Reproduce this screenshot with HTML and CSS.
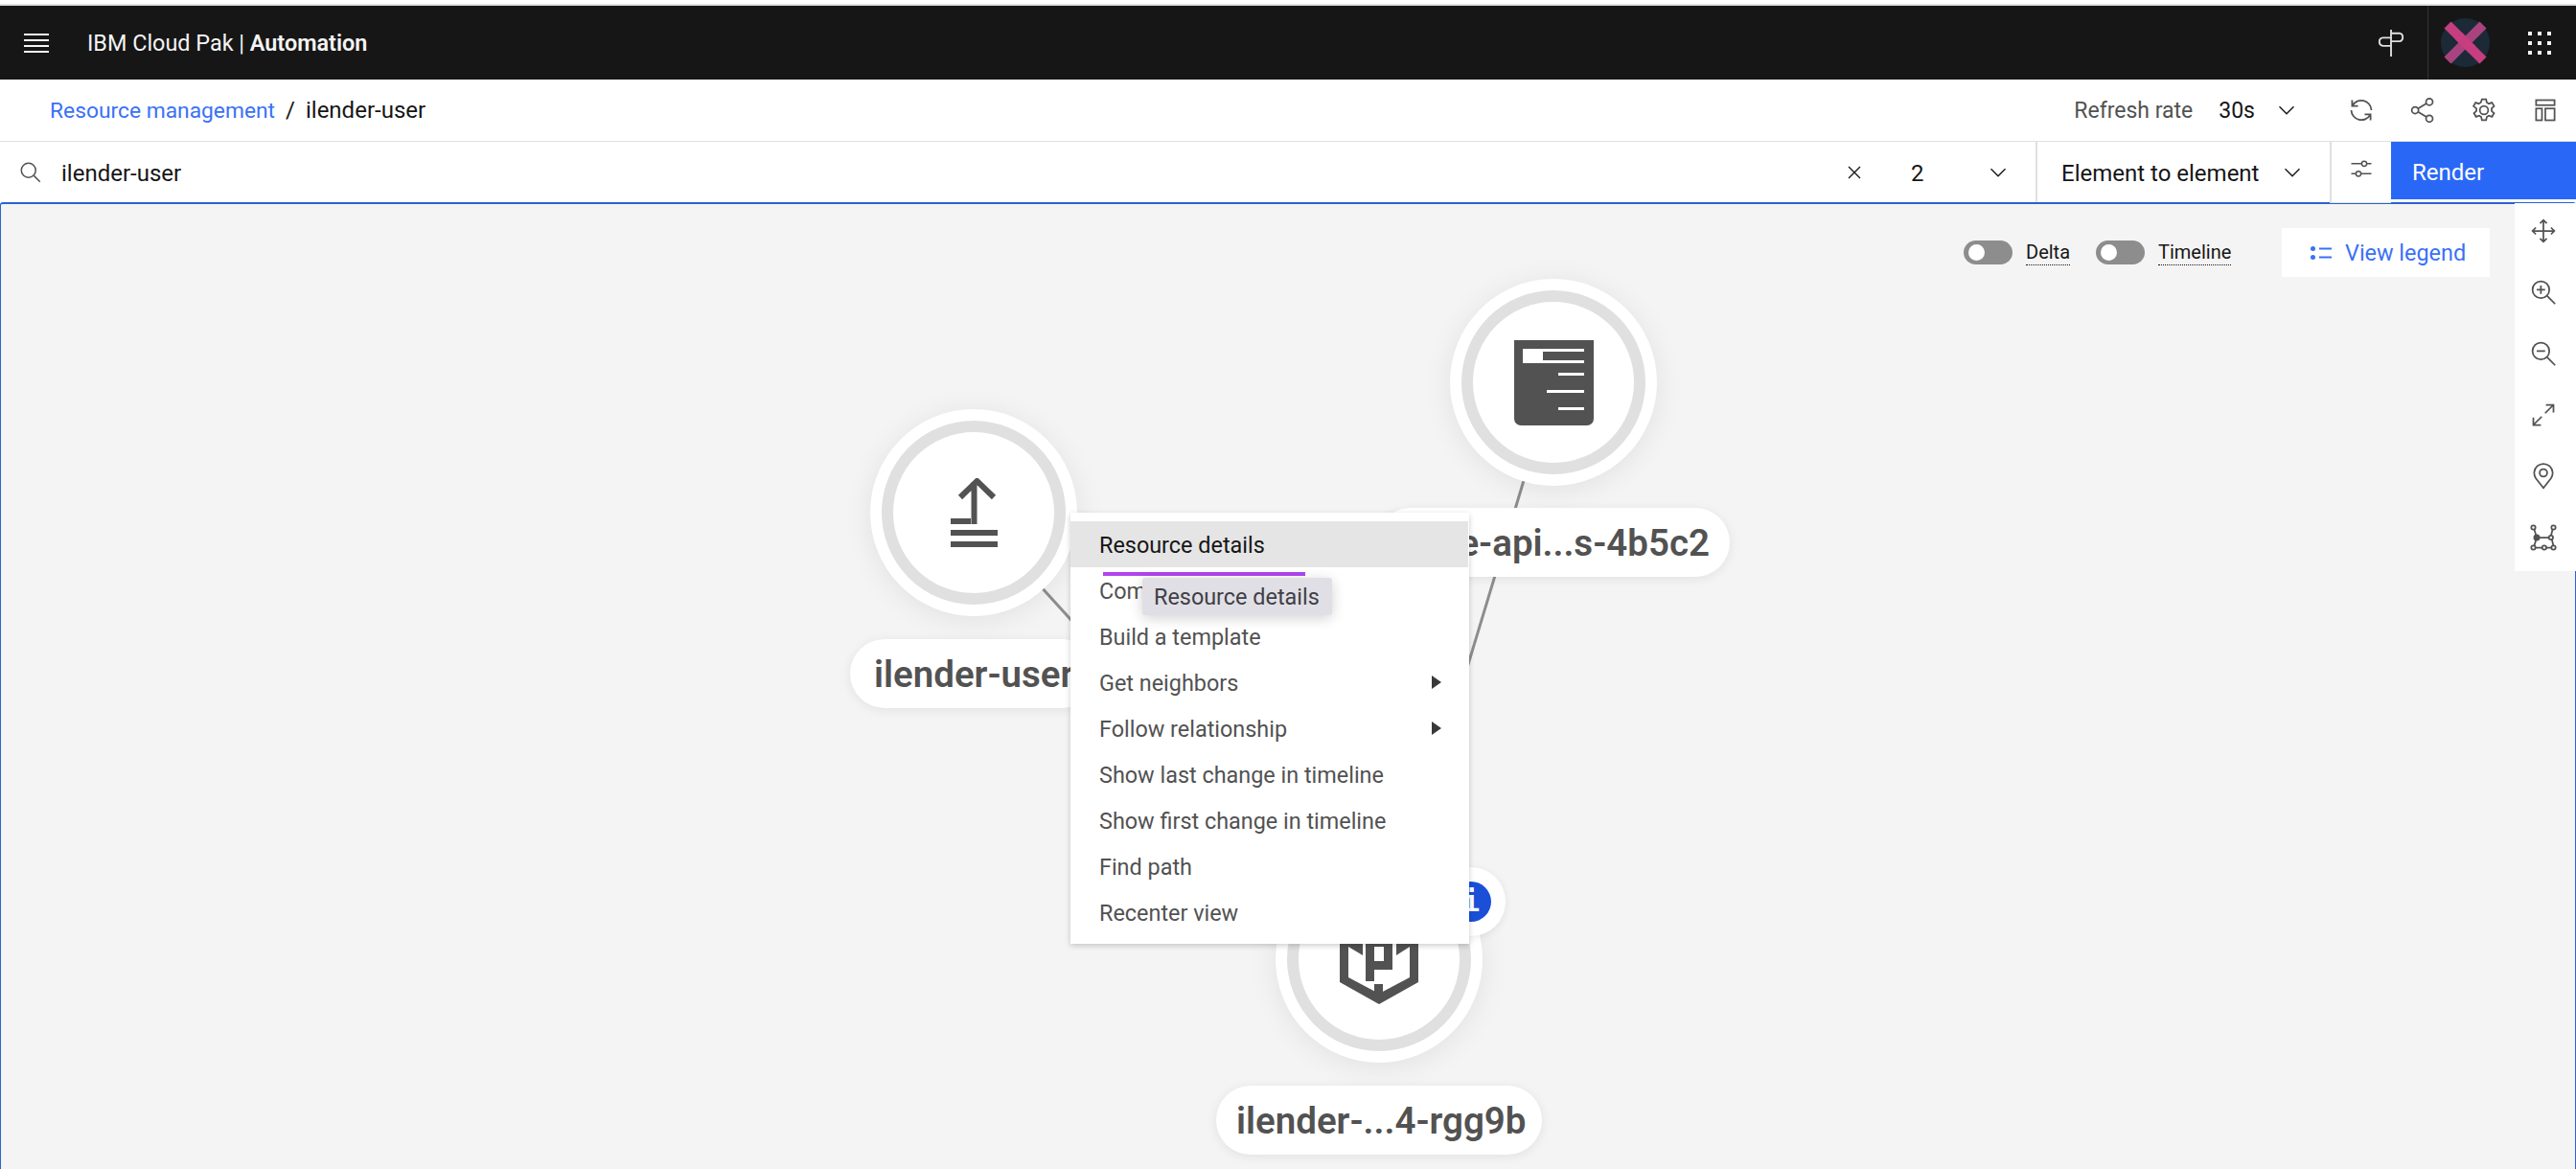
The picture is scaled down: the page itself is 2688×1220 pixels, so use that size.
FILE: index.html
```html
<!DOCTYPE html>
<html lang="en">
<head>
    <meta charset="UTF-8">
    <title>IBM Cloud Pak | Automation</title>
    <link rel="stylesheet" href="styles.css">
</head>
<body>
    <div class="top-strip"></div>

    <header class="shell">
        <svg class="hamburger" viewBox="0 0 26 20"><path d="M0 1h26M0 7h26M0 13h26M0 19h26"/></svg>
        <div class="brand">IBM Cloud Pak | <strong>Automation</strong></div>
        <svg class="ico signpost" viewBox="0 0 32 32"><path d="M16 1v30M16 5h9a4.500 4.500 0 0 1 4 4.500 4.500 4.500 0 0 1-4 4.500h-9M16 10H7a4.500 4.500 0 0 0-4 4.500A4.500 4.500 0 0 0 7 19h9"/></svg>
        <div class="shell-right">
            <svg class="avatar" viewBox="0 0 51 51">
                <circle cx="25.500" cy="25.500" r="25.500" fill="#1b2a36"/>
                <path d="M7 7l37 37" stroke="#c63d80" stroke-width="10"/>
                <path d="M44 7L7 44" stroke="#a8437f" stroke-width="10"/>
                <path d="M18 18l15 15" stroke="#c63d80" stroke-width="10"/>
            </svg>
            <div class="app-grid">
                <i></i><i></i><i></i><i></i><i></i><i></i><i></i><i></i><i></i>
            </div>
        </div>
    </header>

    <div class="breadcrumb-bar">
        <nav class="breadcrumb">
            <a>Resource management</a>
            <span class="slash">/</span>
            <span>ilender-user</span>
        </nav>
        <div class="refresh">
            <span class="refresh-label">Refresh rate</span>
            <span class="refresh-value">30s</span>
            <svg class="ico chevron" viewBox="0 0 32 32"><path d="M6 11l10 10 10-10"/></svg>
        </div>
        <div class="bar-icons">
            <svg class="ico" viewBox="0 0 32 32"><path d="M12 11H5V4M5.500 10.500A12 12 0 0 1 28 16M20 21h7v7M26.500 21.500A12 12 0 0 1 4 16"/></svg>
            <svg class="ico" viewBox="0 0 32 32"><circle cx="7" cy="16" r="4"/><circle cx="24" cy="6" r="4"/><circle cx="24" cy="26" r="4"/><path d="M10.500 14l10-6M10.500 18l10 6"/></svg>
            <svg class="ico" viewBox="0 0 32 32"><path d="M13.500 3h5l.8 3.800 2.500 1.400 3.700-1.200 2.500 4.300-2.900 2.600v3l2.900 2.600-2.500 4.300-3.700-1.200-2.500 1.400-.8 3.800h-5l-.8-3.800-2.500-1.400-3.700 1.200-2.500-4.300 2.900-2.600v-3L3.500 11.300 6 7l3.700 1.200 2.500-1.400z"/><circle cx="16" cy="16" r="5"/></svg>
            <svg class="ico" viewBox="0 0 32 32"><rect x="5" y="4" width="22" height="6"/><rect x="5" y="14" width="7" height="14"/><rect x="16" y="14" width="11" height="14"/></svg>
        </div>
    </div>

    <div class="search-bar">
        <svg class="ico search-ico" viewBox="0 0 32 32"><circle cx="13" cy="13" r="10"/><path d="M20.500 20.500L29 29"/></svg>
        <div class="search-text">ilender-user</div>
        <svg class="ico clear-ico" viewBox="0 0 32 32"><path d="M8 8l16 16M24 8L8 24"/></svg>
        <div class="hops">
            <span>2</span>
            <svg class="ico chevron" viewBox="0 0 32 32"><path d="M6 11l10 10 10-10"/></svg>
        </div>
        <div class="mode">
            <span>Element to element</span>
            <svg class="ico chevron" viewBox="0 0 32 32"><path d="M6 11l10 10 10-10"/></svg>
        </div>
        <div class="filter-btn">
            <svg class="ico" viewBox="0 0 32 32"><circle cx="20" cy="9" r="3.500"/><circle cx="12" cy="23" r="3.500"/><path d="M2 9h14.500M23.500 9H30M2 23h6.500M15.500 23H30"/></svg>
        </div>
        <button class="render-btn">Render</button>
    </div>

    <main class="canvas">
        <svg class="edges" viewBox="0 0 2686 1007">
            <path d="M1015 322L1438 788"/>
            <path d="M1620 186L1438 788"/>
        </svg>

        <div class="node node-upload">
            <div class="ring">
                <svg class="glyph" viewBox="0 0 49 72">
                    <path d="M27.500 48V4M13 20L30.500 3 48 20" class="glyph-line" transform="translate(-3 0)"/>
                    <rect x="0" y="42" width="21" height="6"/>
                    <rect x="0" y="54" width="49" height="6"/>
                    <rect x="0" y="66" width="49" height="6"/>
                </svg>
            </div>
        </div>
        <div class="label label-upload">ilender-user</div>

        <div class="node node-doc">
            <div class="ring">
                <svg class="glyph" viewBox="0 0 83 89">
                    <path d="M0 0h83v82a7 7 0 0 1-7 7H7a7 7 0 0 1-7-7z"/>
                    <path d="M9 9h64v15H9z" fill="#fff"/>
                    <path d="M30 12h43v9H30z"/>
                    <path d="M46 34h27v3H46zM34 52h39v3H34zM46 70h27v3H46z" fill="#fff"/>
                </svg>
            </div>
        </div>
        <div class="label label-doc">e-api...s-4b5c2</div>

        <div class="node node-pod">
            <div class="ring">
                <svg class="glyph" viewBox="0 0 82 94">
                    <path d="M0 0h82v71L41 94 0 71z"/>
                    <path d="M9 20h64v46L41 83 9 66z" fill="#fff"/>
                    <path d="M9 20h15v23L9 34zM73 20H59v23l14-9z"/>
                    <path d="M27 14h28v44H36v12h-9zM36 34v15h10V34z" fill-rule="evenodd"/>
                    <path d="M36 73h9v12h-9z"/>
                </svg>
            </div>
        </div>
        <div class="label label-pod">ilender-...4-rgg9b</div>
        <div class="badge"><span>i</span></div>

        <div class="view-controls">
            <div class="switch"></div>
            <span class="switch-label">Delta</span>
            <div class="switch"></div>
            <span class="switch-label">Timeline</span>
            <button class="legend-btn">
                <svg viewBox="0 0 22 14"><circle cx="2.500" cy="2.500" r="2.500"/><circle cx="2.500" cy="11.500" r="2.500"/><rect x="9" y="1.500" width="13" height="2"/><rect x="9" y="10.500" width="13" height="2"/></svg>
                View legend
            </button>
        </div>

        <div class="toolbar">
            <svg class="ico" viewBox="0 0 32 32"><path d="M16 3v26M3 16h26M12 7l4-4 4 4M12 25l4 4 4-4M7 12l-4 4 4 4M25 12l4 4-4 4"/></svg>
            <svg class="ico" viewBox="0 0 32 32"><circle cx="13" cy="13" r="10"/><path d="M20.500 20.500L30 30M13 8v10M8 13h10"/></svg>
            <svg class="ico" viewBox="0 0 32 32"><circle cx="13" cy="13" r="10"/><path d="M20.500 20.500L30 30M8 13h10"/></svg>
            <svg class="ico" viewBox="0 0 32 32"><path d="M19 4h9v9M28 4L18 14M13 28H4v-9M4 28l10-10"/></svg>
            <svg class="ico" viewBox="0 0 32 32"><path d="M16 30L7 18.500A11 11 0 1 1 25 18.500z"/><circle cx="16" cy="12" r="4.500"/></svg>
            <svg class="ico" viewBox="0 0 32 32"><circle cx="4" cy="4" r="2.500"/><circle cx="28" cy="4" r="2.500"/><circle cx="4" cy="28" r="2.500"/><circle cx="17" cy="28" r="2.500"/><circle cx="28" cy="28" r="2.500"/><circle cx="25" cy="16" r="2.500"/><circle cx="8" cy="16" r="3" fill="#525252"/><path d="M5 6l3 10-3 10M27 6l-2 8M26 18l2 8M11 16h12M6.500 28h8M19.500 28h6"/></svg>
        </div>

        <div class="menu">
            <ul>
                <li class="active">Resource details</li>
                <li>Compare</li>
                <li>Build a template</li>
                <li class="has-sub">Get neighbors</li>
                <li class="has-sub">Follow relationship</li>
                <li>Show last change in timeline</li>
                <li>Show first change in timeline</li>
                <li>Find path</li>
                <li>Recenter view</li>
            </ul>
            <div class="menu-mark"></div>
            <div class="tooltip">Resource details</div>
        </div>
    </main>
</body>
</html>
```

FILE: styles.css
```css
* {
    box-sizing: border-box;
}

html, body {
    margin: 0;
    height: 100%;
}

body {
    display: flex;
    flex-direction: column;
    width: 2688px;
    height: 1220px;
    overflow: hidden;
    background: #fff;
    color: #161616;
    font-family: Roboto, "Noto Sans", sans-serif;
    font-size: 24px;
}

.ico {
    width: 24px;
    height: 24px;
    flex: none;
    fill: none;
    stroke: #525252;
    stroke-width: 2;
}

.chevron {
    stroke: #161616;
    stroke-width: 1.800;
}

/* top */
.top-strip {
    height: 6px;
    border-bottom: 2px solid #e0e0e0;
}

.shell {
    display: flex;
    align-items: center;
    height: 77px;
    background: #161616;
    color: #f4f4f4;
}

.hamburger {
    width: 26px;
    height: 20px;
    margin-left: 25px;
    stroke: #f4f4f4;
    stroke-width: 2;
}

.brand {
    margin-left: 40px;
    flex: 1;
    font-size: 23.400px;
}

.brand strong {
    font-weight: 600;
}

.signpost {
    width: 30px;
    height: 30px;
    stroke: #e0e0e0;
    margin-right: 23px;
}

.shell-right {
    display: flex;
    align-items: center;
    height: 100%;
    padding-left: 13px;
    border-left: 1px solid #333;
}

.avatar {
    width: 51px;
    height: 51px;
}

.app-grid {
    display: grid;
    grid-template-columns: repeat(3, 4px);
    gap: 6px;
    margin-left: 40px;
    margin-right: 26px;
}

.app-grid i {
    height: 4px;
    background: #f4f4f4;
}

/* breadcrumb row */
.breadcrumb-bar {
    display: flex;
    align-items: center;
    height: 65px;
    border-bottom: 1px solid #e0e0e0;
}

.breadcrumb {
    display: flex;
    flex: 1;
    align-items: baseline;
    gap: 11px;
    margin-left: 52px;
}

.breadcrumb a {
    color: #3a71f6;
    font-size: 22.800px;
}

.refresh {
    display: flex;
    align-items: center;
    font-size: 23px;
}

.refresh-label {
    color: #525252;
    margin-right: 27px;
}

.refresh-value {
    margin-right: 21px;
}

.bar-icons {
    display: flex;
    gap: 36px;
    margin-left: 52px;
    margin-right: 18px;
}

.bar-icons .ico {
    width: 28px;
    height: 28px;
}

/* search row */
.search-bar {
    display: flex;
    align-items: center;
    height: 63px;
}

.search-ico {
    margin-left: 20px;
}

.search-text {
    flex: 1;
    margin-left: 20px;
    padding-top: 2px;
}

.clear-ico {
    stroke: #161616;
    stroke-width: 1.800;
}

.hops {
    display: flex;
    align-items: center;
    justify-content: space-between;
    width: 130px;
    height: 100%;
    margin-left: 47px;
    padding-right: 27px;
}

.hops span,
.mode span {
    padding-top: 2px;
}

.mode {
    display: flex;
    align-items: center;
    justify-content: space-between;
    width: 307px;
    height: 100%;
    padding: 0 27px 0 25px;
    border-left: 2px solid #e0e0e0;
}

.filter-btn {
    display: flex;
    align-items: center;
    justify-content: center;
    width: 64px;
    height: 64px;
    position: relative;
    z-index: 2;
    padding-bottom: 6px;
    background: #fff;
    border-left: 2px solid #e0e0e0;
    border-bottom: 1px solid #e0e0e0;
}

.render-btn {
    align-self: stretch;
    width: 193px;
    margin-bottom: 3px;
    padding: 4px 22px 0;
    border: 0;
    background: #2968f6;
    color: #fff;
    font: inherit;
    text-align: left;
}

/* canvas */
.canvas {
    position: relative;
    flex: 1;
    background: #f4f4f4;
    border: 1px solid #2a62d0;
    border-top-width: 2px;
    border-bottom: 0;
    border-radius: 3px 3px 0 0;
}

.edges {
    position: absolute;
    left: 0;
    top: 0;
    width: 2686px;
    height: 1007px;
    fill: none;
    stroke: #8d8d8d;
    stroke-width: 3;
}

.node {
    position: absolute;
    width: 216px;
    height: 216px;
    padding: 12px;
    border-radius: 50%;
    background: #fff;
    box-shadow: 0 4px 30px rgba(0, 0, 0, 0.08);
}

.ring {
    display: flex;
    align-items: center;
    justify-content: center;
    width: 100%;
    height: 100%;
    border: 12px solid #e0e0e0;
    border-radius: 50%;
    background: #fff;
}

.glyph {
    fill: #525252;
}

.glyph-line {
    fill: none;
    stroke: #525252;
    stroke-width: 6;
}

.node-upload {
    left: 907px;
    top: 214px;
}

.node-upload .glyph {
    width: 49px;
    height: 72px;
}

.node-doc {
    left: 1512px;
    top: 78px;
}

.node-doc .glyph {
    width: 83px;
    height: 89px;
}

.node-pod {
    left: 1330px;
    top: 680px;
}

.node-pod .glyph {
    width: 82px;
    height: 94px;
}

.label {
    position: absolute;
    height: 72px;
    padding: 0 21px;
    border-radius: 36px;
    background: #fff;
    color: #525252;
    font-size: 38.500px;
    font-weight: 600;
    line-height: 74px;
    text-align: center;
    white-space: nowrap;
    box-shadow: 0 2px 12px rgba(0, 0, 0, 0.08);
}

.label-upload {
    left: 886px;
    top: 454px;
    width: 258px;
    text-align: left;
    padding-left: 25px;
}

.label-doc {
    left: 1435px;
    top: 317px;
    width: 369px;
    text-align: right;
}

.label-pod {
    left: 1268px;
    top: 920px;
    width: 340px;
}

.badge {
    position: absolute;
    left: 1498px;
    top: 692px;
    display: flex;
    align-items: center;
    justify-content: center;
    width: 72px;
    height: 72px;
    border-radius: 50%;
    background: #fff;
    box-shadow: 0 2px 10px rgba(0, 0, 0, 0.08);
}

.badge span {
    width: 42px;
    height: 42px;
    border-radius: 50%;
    background: #1a4fd8;
    color: #fff;
    font-family: "DejaVu Sans Mono", monospace;
    font-size: 30px;
    font-weight: 700;
    line-height: 42px;
    text-align: center;
}

/* toggles and legend */
.view-controls {
    position: absolute;
    top: 25px;
    left: 2048px;
    display: flex;
    align-items: center;
    width: 549px;
    height: 51px;
    font-size: 20px;
}

.switch {
    position: relative;
    width: 51px;
    height: 25px;
    border-radius: 13px;
    background: #8d8d8d;
    margin-right: 14px;
}

.switch::after {
    content: "";
    position: absolute;
    left: 5px;
    top: 4px;
    width: 17px;
    height: 17px;
    border-radius: 50%;
    background: #fff;
}

.switch-label {
    margin-right: 27px;
    padding-bottom: 1px;
    border-bottom: 1px dotted #161616;
}

.legend-btn {
    display: flex;
    align-items: center;
    gap: 14px;
    width: 217px;
    height: 51px;
    margin-left: auto;
    padding: 0 30px;
    border: 0;
    background: #fff;
    color: #3a71f6;
    font: inherit;
    font-size: 23.400px;
    white-space: nowrap;
}

.legend-btn svg {
    flex: none;
    width: 22px;
    height: 14px;
    fill: #3a71f6;
}

.toolbar {
    position: absolute;
    top: -1px;
    right: -1px;
    display: flex;
    flex-direction: column;
    align-items: center;
    gap: 36px;
    width: 64px;
    height: 384px;
    padding-top: 15px;
    padding-right: 4px;
    background: #fff;
}

.toolbar .ico {
    width: 28px;
    height: 28px;
}

/* context menu */
.menu {
    position: absolute;
    left: 1116px;
    top: 322px;
    width: 416px;
    height: 450px;
    padding: 9px 1px 9px 0;
    background: #fff;
    box-shadow: 0 2px 6px rgba(0, 0, 0, 0.2);
    font-size: 23.400px;
}

.menu ul {
    margin: 0;
    padding: 0;
    list-style: none;
}

.menu li {
    position: relative;
    height: 48px;
    padding-left: 30px;
    color: #525252;
    line-height: 50px;
}

.menu li.active {
    background: #e5e5e5;
    color: #161616;
}

.menu li.has-sub::after {
    content: "";
    position: absolute;
    left: 377px;
    top: 17px;
    border-left: 10px solid #393939;
    border-top: 7px solid transparent;
    border-bottom: 7px solid transparent;
}

.menu-mark {
    position: absolute;
    left: 34px;
    top: 62px;
    width: 211px;
    height: 4px;
    background: #b045ef;
}

.tooltip {
    position: absolute;
    left: 75px;
    top: 68px;
    width: 198px;
    height: 39px;
    padding-left: 12px;
    border-radius: 3px;
    background: #e1dfe6;
    color: #3f3f45;
    line-height: 40px;
    white-space: nowrap;
    box-shadow: 0 3px 14px rgba(0, 0, 0, 0.18);
}
```
